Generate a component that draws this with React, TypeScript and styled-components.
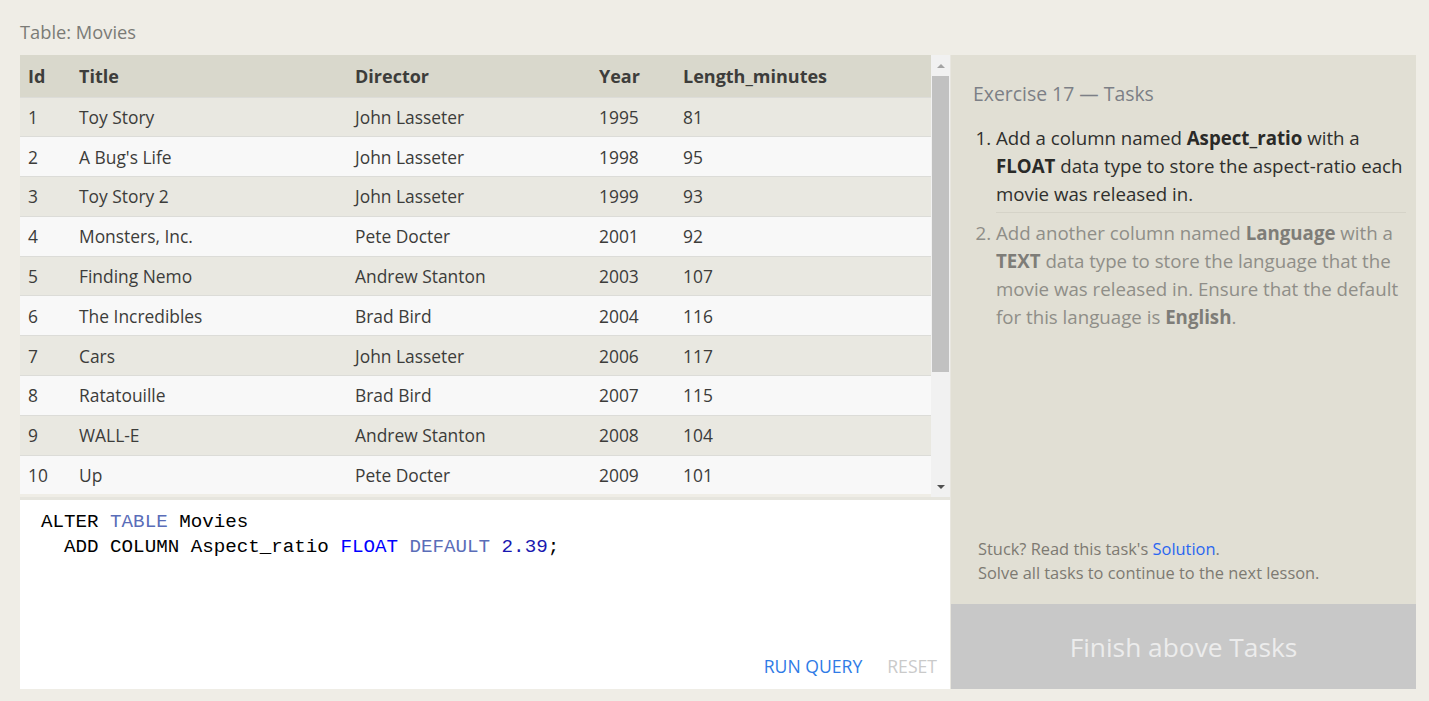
import styled, { createGlobalStyle } from 'styled-components';

const GlobalStyle = createGlobalStyle`
  body {
    margin: 0;
    background: #efede6;
    font-family: 'Open Sans', 'Noto Sans', sans-serif;
    color: #333;
  }
`;

const movies = [
  [1, 'Toy Story', 'John Lasseter', 1995, 81],
  [2, "A Bug's Life", 'John Lasseter', 1998, 95],
  [3, 'Toy Story 2', 'John Lasseter', 1999, 93],
  [4, 'Monsters, Inc.', 'Pete Docter', 2001, 92],
  [5, 'Finding Nemo', 'Andrew Stanton', 2003, 107],
  [6, 'The Incredibles', 'Brad Bird', 2004, 116],
  [7, 'Cars', 'John Lasseter', 2006, 117],
  [8, 'Ratatouille', 'Brad Bird', 2007, 115],
  [9, 'WALL-E', 'Andrew Stanton', 2008, 104],
  [10, 'Up', 'Pete Docter', 2009, 101],
];

const columns = ['Id', 'Title', 'Director', 'Year', 'Length_minutes'];
const colWidths = ['51px', '276px', '244px', '84px', 'auto'];

const Page = styled.div`
  padding: 19px 13px 12px 20px;
`;

const Caption = styled.div`
  font-size: 18.3px;
  color: #7b7b76;
  height: 26px;
  margin-bottom: 10px;
`;

const Panel = styled.div`
  display: flex;
  height: 634px;
`;

const LeftColumn = styled.div`
  width: 930px;
  display: flex;
  flex-direction: column;
`;

const TableArea = styled.div`
  display: flex;
  height: 442px;
  border-bottom: 3px solid #e6e5de;
`;

const TableScroll = styled.div`
  flex: 1;
  overflow: hidden;
`;

const Table = styled.table`
  width: 100%;
  border-collapse: collapse;
  table-layout: fixed;
  font-size: 17.4px;
`;

const HeadCell = styled.th<{ $w: string }>`
  box-sizing: border-box;
  width: ${(p) => p.$w};
  height: 42px;
  padding: 0 0 0 8px;
  text-align: left;
  font-size: 18px;
  font-weight: 700;
  color: #3d3d3b;
  background: #d9d8cc;
`;

const Row = styled.tr<{ $odd: boolean }>`
  background: ${(p) => (p.$odd ? '#e9e8e1' : '#f8f8f8')};
  border-top: 1px solid #dcdcd8;
`;

const Cell = styled.td`
  height: 38.8px;
  padding: 0 0 0 8px;
  color: #3c3c3a;
  white-space: nowrap;
`;

const Scrollbar = styled.div`
  width: 19px;
  display: flex;
  flex-direction: column;
  align-items: center;
  background: #f1f1f1;
`;

const Arrow = styled.div<{ $down?: boolean }>`
  height: 21px;
  width: 100%;
  display: flex;
  align-items: center;
  justify-content: center;
  &::before {
    content: '';
    border-left: 4px solid transparent;
    border-right: 4px solid transparent;
    ${(p) => (p.$down ? 'border-top: 4px solid #505050;' : 'border-bottom: 4px solid #a3a3a3;')}
  }
`;

const Track = styled.div`
  flex: 1;
  width: 17px;
  display: flex;
  flex-direction: column;
`;

const Thumb = styled.div`
  height: 296px;
  background: #c1c1c1;
`;

const Editor = styled.div`
  flex: 1;
  background: #fff;
  display: flex;
  flex-direction: column;
  justify-content: space-between;
  padding: 10px 13px 11px 21px;
`;

const Code = styled.pre`
  margin: 0;
  font-family: 'Liberation Mono', 'DejaVu Sans Mono', monospace;
  font-size: 19.2px;
  line-height: 25px;
  color: #000;
`;

const Kw = styled.span<{ $tone: 'keyword' | 'type' | 'number' }>`
  color: ${(p) => (p.$tone === 'keyword' ? '#5a6db8' : p.$tone === 'type' ? '#0000ff' : '#1818b0')};
`;

const Actions = styled.div`
  display: flex;
  justify-content: flex-end;
  gap: 25px;
`;

const ActionButton = styled.button<{ $muted?: boolean }>`
  border: none;
  background: none;
  padding: 0;
  font-family: inherit;
  font-size: 17.6px;
  color: ${(p) => (p.$muted ? '#cacaca' : '#2f7be6')};
`;

const RightColumn = styled.div`
  width: 465px;
  display: flex;
  flex-direction: column;
  background: #e1dfd4;
  border-left: 1px solid #e8e6df;
`;

const Tasks = styled.div`
  flex: 1;
  padding: 25px 10px 0 22px;
  display: flex;
  flex-direction: column;
`;

const TasksTitle = styled.div`
  font-size: 19.4px;
  color: #7c7f86;
  margin-bottom: 17px;
`;

const TaskList = styled.ol`
  margin: 0;
  padding-left: 23px;
  font-size: 18.7px;
  line-height: 28px;
`;

const Task = styled.li<{ $done?: boolean }>`
  color: ${(p) => (p.$done ? '#2f2f2d' : '#8f8e88')};
  padding: 0 0 4px 0;
  & + & {
    border-top: 1px solid #d5d3c8;
    padding-top: 6px;
  }
  b {
    color: ${(p) => (p.$done ? '#2a2a28' : '#7e7d78')};
  }
`;

const Hint = styled.div`
  margin-top: auto;
  padding: 0 0 19px 5px;
  font-size: 16.4px;
  line-height: 24px;
  color: #7d7a72;
`;

const Link = styled.a`
  color: #2a66f0;
  text-decoration: none;
`;

const FinishButton = styled.div`
  height: 85px;
  background: #c8c8c8;
  color: #ececec;
  font-size: 26.3px;
  display: flex;
  align-items: center;
  justify-content: center;
`;

export default function App() {
  return (
    <>
      <GlobalStyle />
      <Page>
        <Caption>Table: Movies</Caption>
        <Panel>
          <LeftColumn>
            <TableArea>
              <TableScroll>
                <Table>
                  <thead>
                    <tr>
                      {columns.map((c, i) => (
                        <HeadCell key={c} $w={colWidths[i]}>
                          {c}
                        </HeadCell>
                      ))}
                    </tr>
                  </thead>
                  <tbody>
                    {movies.map((m, i) => (
                      <Row key={m[0]} $odd={i % 2 === 0}>
                        {m.map((v, j) => (
                          <Cell key={j}>{v}</Cell>
                        ))}
                      </Row>
                    ))}
                  </tbody>
                </Table>
              </TableScroll>
              <Scrollbar>
                <Arrow />
                <Track>
                  <Thumb />
                </Track>
                <Arrow $down />
              </Scrollbar>
            </TableArea>
            <Editor>
              <Code>
                ALTER <Kw $tone="keyword">TABLE</Kw> Movies{'\n'}
                {'  '}ADD COLUMN Aspect_ratio <Kw $tone="type">FLOAT</Kw> <Kw $tone="keyword">DEFAULT</Kw>{' '}
                <Kw $tone="number">2.39</Kw>;
              </Code>
              <Actions>
                <ActionButton>RUN QUERY</ActionButton>
                <ActionButton $muted>RESET</ActionButton>
              </Actions>
            </Editor>
          </LeftColumn>
          <RightColumn>
            <Tasks>
              <TasksTitle>Exercise 17 — Tasks</TasksTitle>
              <TaskList>
                <Task $done>
                  Add a column named <b>Aspect_ratio</b> with a <b>FLOAT</b> data type to store the aspect-ratio each
                  movie was released in.
                </Task>
                <Task>
                  Add another column named <b>Language</b> with a <b>TEXT</b> data type to store the language that the
                  movie was released in. Ensure that the default for this language is <b>English</b>.
                </Task>
              </TaskList>
              <Hint>
                Stuck? Read this task's <Link href="#">Solution</Link>.
                <br />
                Solve all tasks to continue to the next lesson.
              </Hint>
            </Tasks>
            <FinishButton>Finish above Tasks</FinishButton>
          </RightColumn>
        </Panel>
      </Page>
    </>
  );
}
